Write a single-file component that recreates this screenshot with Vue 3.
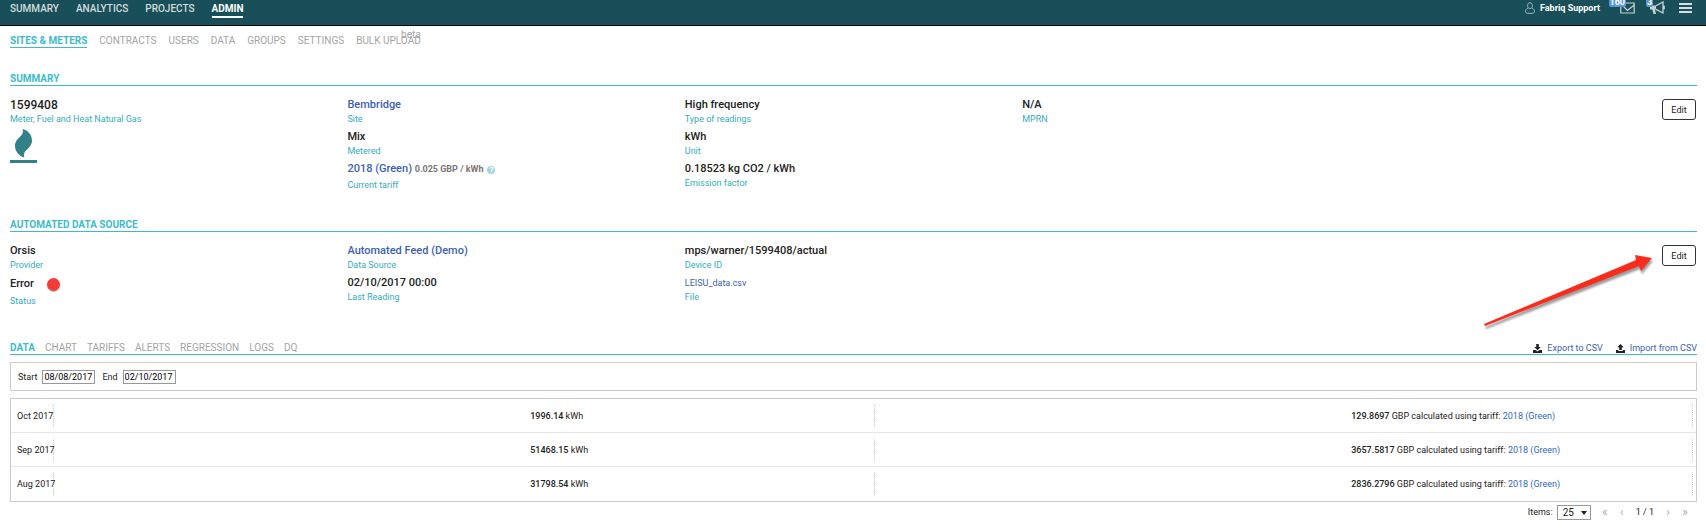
<script setup>
import { ref } from 'vue';

const mainNav = ['Summary', 'Analytics', 'Projects', 'Admin'];
const subNav = ['Sites & Meters', 'Contracts', 'Users', 'Data', 'Groups', 'Settings', 'Bulk Upload'];
const tabs = ['Data', 'Chart', 'Tariffs', 'Alerts', 'Regression', 'Logs', 'DQ'];

const activeTab = ref('Data');
const start = ref('08/08/2017');
const end = ref('02/10/2017');
const pageSize = ref('25');

const rows = [
  { month: 'Oct 2017', usage: '1996.14', cost: '129.8697' },
  { month: 'Sep 2017', usage: '51468.15', cost: '3657.5817' },
  { month: 'Aug 2017', usage: '31798.54', cost: '2836.2796' }
];
</script>

<template>
  <div class="page">
    <header class="topbar">
      <nav class="main-nav">
        <a v-for="item in mainNav" :key="item" href="#" :class="{ active: item === 'Admin' }">{{ item }}</a>
      </nav>
      <div class="tools">
        <a href="#" class="user">
          <svg width="10" height="12" viewBox="0 0 10 12" fill="none" stroke="#9fb9bd">
            <path d="M5 .8C3.3.8 2.6 2 2.6 3.6S3.6 6.6 5 6.6s2.4-1.400 2.400-3S6.700.8 5 .8zM3 6C1.500 6.500.6 7.800.6 9.300c0 1.200.7 2 2 2h4.800c1.300 0 2-.8 2-2C9.400 7.800 8.500 6.500 7 6" />
          </svg>
          <span>Fabriq Support</span>
        </a>
        <button class="tool" aria-label="Messages">
          <svg width="15" height="12" viewBox="0 0 15 12" fill="none" stroke="#c5d3d5" stroke-width="1.2">
            <path d="M.8 1h13.400v10H.8zM3 4l4.500 4.500L14.200 3" />
          </svg>
          <span class="badge mail">160</span>
        </button>
        <button class="tool" aria-label="Announcements">
          <svg width="16" height="14" viewBox="0 0 16 14">
            <path d="M1 4.500h6v4H6l1 4.500H4.500l-1.200-4.500H1z" fill="#c5d3d5" />
            <path d="M7 4.700L14 1v11L7 8.400M14.200 5.500h1v2h-1" fill="none" stroke="#c5d3d5" stroke-width="1.300" />
          </svg>
          <span class="badge news">3</span>
        </button>
        <button class="tool" aria-label="Menu">
          <svg width="13" height="11" viewBox="0 0 13 11" fill="#d5dfe0">
            <path d="M0 0h13v2H0zM0 4h13v2H0zM0 8h13v2H0z" />
          </svg>
        </button>
      </div>
    </header>

    <main class="content">
      <nav class="sub-nav">
        <a v-for="(item, i) in subNav" :key="item" href="#" :class="{ active: i === 0 }">
          {{ item }}<sup v-if="item === 'Bulk Upload'">beta</sup>
        </a>
      </nav>

      <section class="panel summary">
        <h2>Summary</h2>
        <div class="columns">
          <dl>
            <dd class="meter">1599408</dd>
            <dt>Meter, Fuel and Heat Natural Gas</dt>
            <svg class="flame" width="27" height="34" viewBox="0 0 27 34" fill="#338188">
              <path d="M12.500 0C17 1 22 5 22 11.500C22 20 11.500 21 14.500 28.500C10 27.500 5 23 5 17C5 8.500 15 7.500 12.500 0z" />
              <path d="M0 31h27v3H0z" />
            </svg>
          </dl>
          <dl>
            <dd><a href="#">Bembridge</a></dd>
            <dt>Site</dt>
            <dd>Mix</dd>
            <dt>Metered</dt>
            <dd>
              <a href="#">2018 (Green)</a> <small>0.025 GBP / kWh</small>
              <span class="help">?</span>
            </dd>
            <dt class="low">Current tariff</dt>
          </dl>
          <dl>
            <dd>High frequency</dd>
            <dt>Type of readings</dt>
            <dd>kWh</dd>
            <dt>Unit</dt>
            <dd>0.18523 kg CO2 / kWh</dd>
            <dt>Emission factor</dt>
          </dl>
          <dl>
            <dd>N/A</dd>
            <dt>MPRN</dt>
          </dl>
          <div class="actions"><button class="edit">Edit</button></div>
        </div>
      </section>

      <section class="panel source">
        <h2>Automated Data Source</h2>
        <div class="columns">
          <dl>
            <dd>Orsis</dd>
            <dt>Provider</dt>
            <dd class="status">Error <i class="dot"></i></dd>
            <dt class="low">Status</dt>
          </dl>
          <dl>
            <dd><a href="#">Automated Feed (Demo)</a></dd>
            <dt>Data Source</dt>
            <dd>02/10/2017 00:00</dd>
            <dt>Last Reading</dt>
          </dl>
          <dl>
            <dd>mps/warner/1599408/actual</dd>
            <dt>Device ID</dt>
            <dd class="file"><a href="#">LEISU_data.csv</a></dd>
            <dt>File</dt>
          </dl>
          <dl></dl>
          <div class="actions"><button class="edit">Edit</button></div>
        </div>
        <svg class="pointer" width="174" height="76" viewBox="0 0 174 76">
          <path d="M3 69L155 5 154 0 171 3 160 16 158 11 4 71z" fill="#fb2c1c" />
        </svg>
      </section>

      <section>
        <div class="tab-bar">
          <div class="tabs">
            <button v-for="tab in tabs" :key="tab" :class="{ active: tab === activeTab }" @click="activeTab = tab">
              {{ tab }}
            </button>
          </div>
          <div class="transfer">
            <a href="#">
              <svg width="9" height="9" viewBox="0 0 9 9" fill="#222">
                <path d="M3.200 0h2.600v3h2L4.500 6.200 1.200 3h2zM0 6h2.500l2 1.500L6.500 6H9v3H0z" />
              </svg>
              Export to CSV
            </a>
            <a href="#">
              <svg width="9" height="9" viewBox="0 0 9 9" fill="#222">
                <path d="M4.500 0l3.300 3.200h-2V6H3.200V3.200h-2zM0 6h2.300v1h4.400V6H9v3H0z" />
              </svg>
              Import from CSV
            </a>
          </div>
        </div>

        <form class="filter" @submit.prevent>
          <label for="start">Start</label>
          <input id="start" v-model="start" type="text" />
          <label for="end">End</label>
          <input id="end" v-model="end" type="text" />
        </form>

        <table class="readings">
          <tbody>
            <tr v-for="row in rows" :key="row.month">
              <td class="month"><div>{{ row.month }}</div></td>
              <td><div class="value"><b>{{ row.usage }}</b> kWh</div></td>
              <td>
                <div class="value"><b>{{ row.cost }}</b> GBP calculated using tariff: <a href="#">2018 (Green)</a></div>
              </td>
            </tr>
          </tbody>
        </table>

        <div class="pager">
          <label for="items">Items:</label>
          <span class="select">
            <select id="items" v-model="pageSize">
              <option>25</option>
              <option>50</option>
            </select>
          </span>
          <button disabled>«</button>
          <button disabled>‹</button>
          <span class="count">1 / 1</span>
          <button disabled>›</button>
          <button disabled>»</button>
        </div>
      </section>
    </main>
  </div>
</template>

<style>
body {
  margin: 0;
  background: #fff;
}
</style>

<style scoped>
.page {
  font-family: Roboto, "Noto Sans", sans-serif;
  font-size: 9px;
  line-height: 16px;
  color: #222;
}

a {
  color: #4060b4;
  text-decoration: none;
}

button,
input,
select {
  font: inherit;
  color: inherit;
}

button {
  padding: 0;
  border: 0;
  background: none;
}

.topbar {
  display: flex;
  justify-content: space-between;
  align-items: flex-start;
  height: 25px;
  padding: 0 14px 0 10px;
  background: #184f59;
  border-bottom: 1px solid #000;
}

.main-nav {
  display: flex;
  gap: 17px;
  font-size: 10px;
  font-weight: 500;
  line-height: 17px;
  text-transform: uppercase;
}

.main-nav a {
  height: 16px;
  color: #d1dcde;
  border-bottom: 2px solid transparent;
}

.main-nav a.active {
  color: #fff;
  font-weight: 700;
  border-color: #fff;
}

.tools {
  display: flex;
  gap: 14px;
}

.user {
  display: flex;
  align-items: center;
  gap: 5px;
  margin-right: 6px;
  color: #fff;
  font-weight: 700;
}

.tool {
  display: flex;
  position: relative;
  align-items: center;
  height: 16px;
}

.badge {
  position: absolute;
  top: -3px;
  padding: 0 1px;
  border-radius: 2px;
  background: #5a98d8;
  color: #fff;
  font-weight: 700;
  line-height: 10px;
}

.badge.mail {
  right: 9px;
}

.badge.news {
  left: -3px;
}

.content {
  padding: 0 9px 0 10px;
}

.sub-nav {
  display: flex;
  gap: 12px;
  padding-top: 7px;
  font-size: 10px;
  line-height: 15px;
  text-transform: uppercase;
}

.sub-nav a {
  position: relative;
  height: 14px;
  color: #a4a4a4;
  border-bottom: 1px solid transparent;
}

.sub-nav a.active {
  color: #3dbcc8;
  font-weight: 700;
  border-color: #3dbcc8;
}

.sub-nav sup {
  position: absolute;
  top: -6px;
  right: 0;
  font-size: 10px;
  line-height: 15px;
  text-transform: lowercase;
}

.panel {
  position: relative;
}

.summary {
  height: 146px;
  padding-top: 22px;
}

.source {
  height: 123px;
}

h2 {
  height: 15px;
  margin: 0;
  border-bottom: 1px solid #3dbcc8;
  color: #3dbcc8;
  font-size: 10px;
  font-weight: 700;
  line-height: 17px;
  text-transform: uppercase;
}

.columns {
  display: grid;
  grid-template-columns: repeat(5, 1fr);
  padding-top: 11px;
}

dl {
  margin: 0;
}

dd {
  margin: 0;
  color: #222;
  font-size: 11px;
  font-weight: 500;
}

dd.meter {
  font-size: 12px;
}

dt {
  margin-bottom: 4px;
  color: #35acba;
  line-height: 12px;
}

dt.low {
  padding-top: 2px;
}

small {
  color: #777;
  font-size: 9px;
  font-weight: 700;
}

.flame {
  display: block;
}

.help {
  display: inline-block;
  width: 8px;
  height: 8px;
  margin-left: 4px;
  border-radius: 50%;
  background: #a5d8de;
  color: #fff;
  font-size: 8px;
  font-weight: 700;
  line-height: 8px;
  text-align: center;
}

.status {
  display: flex;
  align-items: center;
  gap: 13px;
  height: 18px;
}

.dot {
  width: 13px;
  height: 13px;
  border-radius: 50%;
  background: #f63c38;
  box-shadow: 0 1px 1px #bbb;
}

dd.file {
  font-size: 9px;
  font-weight: 400;
}

.actions {
  padding-top: 2px;
  padding-right: 1px;
  text-align: right;
}

.edit {
  width: 34px;
  height: 21px;
  border: 1px solid #333;
  border-radius: 3px;
  background: #fff;
}

.pointer {
  position: absolute;
  top: 39px;
  right: 42px;
  filter: drop-shadow(1px 3px 1px rgba(0, 0, 0, 0.4));
}

.tab-bar {
  display: flex;
  justify-content: space-between;
  height: 15px;
  border-bottom: 1px solid #3dbcc8;
}

.tabs {
  display: flex;
  gap: 10px;
  font-size: 10px;
}

.tabs button {
  height: 17px;
  color: #a4a4a4;
  line-height: 17px;
  text-transform: uppercase;
}

.tabs .active {
  color: #3dbcc8;
  font-weight: 700;
}

.transfer {
  display: flex;
  gap: 13px;
}

.transfer a {
  display: flex;
  align-items: center;
  gap: 5px;
  height: 18px;
}

.filter {
  display: flex;
  align-items: center;
  gap: 5px;
  height: 27px;
  margin: 7px 0;
  padding-left: 7px;
  border: 1px solid #ccc;
}

.filter input {
  box-sizing: border-box;
  width: 53px;
  height: 14px;
  margin-right: 2px;
  padding: 0 1px;
  border: 1px solid #999;
  color: #000;
}

.readings {
  width: 100%;
  border: 1px solid #ccc;
  border-collapse: separate;
  border-spacing: 0;
  table-layout: fixed;
}

.readings td {
  padding: 5px 0;
  border-bottom: 1px solid #e6e6e6;
}

.readings tr:last-child td {
  padding-bottom: 6px;
  border-bottom: 0;
}

.readings .month {
  width: 43px;
}

.month div {
  padding-left: 6px;
  white-space: nowrap;
}

td div {
  height: 23px;
  border-right: 1px dotted #ccc;
  line-height: 24px;
}

.value {
  padding-left: 58%;
}

td:last-child .value {
  margin-right: 3px;
}

.value b {
  font-weight: 500;
}

.value a {
  color: #2f68c4;
}

.pager {
  display: flex;
  justify-content: flex-end;
  align-items: center;
  gap: 11px;
  padding: 2px 9px 0 0;
}

.pager button {
  width: 6px;
  color: #aaa;
  font-size: 12px;
}

.pager label {
  margin-right: -7px;
}

.select {
  display: flex;
  position: relative;
}

.select::after {
  content: "";
  position: absolute;
  top: 6px;
  right: 4px;
  border: 3px solid transparent;
  border-top: 4px solid #222;
  border-bottom: 0;
  pointer-events: none;
}

select {
  width: 34px;
  height: 15px;
  padding: 0 0 0 5px;
  border: 1px solid #999;
  background: #fff;
  font-size: 10px;
  line-height: 13px;
  appearance: none;
}
</style>
